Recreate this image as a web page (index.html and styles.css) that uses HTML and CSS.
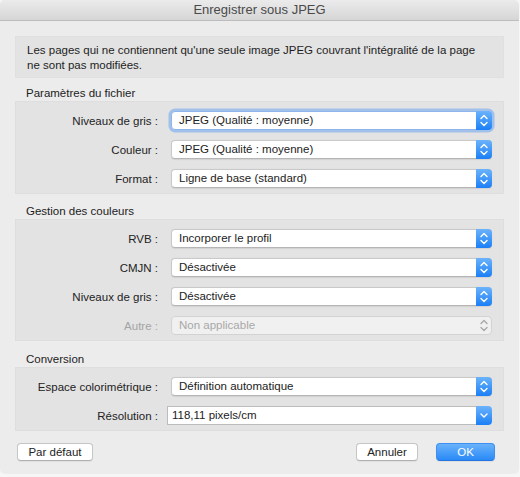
FILE: index.html
```html
<!DOCTYPE html>
<html lang="fr">
<head>
<meta charset="utf-8">
<title>Enregistrer sous JPEG</title>
<link rel="stylesheet" href="styles.css">
</head>
<body>
<div class="window">
  <div class="titlebar">Enregistrer sous JPEG</div>
  <div class="content">
    <div class="note">Les pages qui ne contiennent qu'une seule image JPEG couvrant l'intégralité de la page<br>ne sont pas modifiées.</div>

    <section class="group">
      <div class="group-title">Paramètres du fichier</div>
      <div class="box">
        <div class="row">
          <span class="label">Niveaux de gris :</span>
          <div class="popup focus"><span class="value">JPEG (Qualité : moyenne)</span><span class="arrows"><svg width="16" height="19" viewBox="0 0 16 19"><polyline points="5,7.5 8,4.5 11,7.5"/><polyline points="5,11.5 8,14.5 11,11.5"/></svg></span></div>
        </div>
        <div class="row">
          <span class="label">Couleur :</span>
          <div class="popup"><span class="value">JPEG (Qualité : moyenne)</span><span class="arrows"><svg width="16" height="19" viewBox="0 0 16 19"><polyline points="5,7.5 8,4.5 11,7.5"/><polyline points="5,11.5 8,14.5 11,11.5"/></svg></span></div>
        </div>
        <div class="row">
          <span class="label">Format :</span>
          <div class="popup"><span class="value">Ligne de base (standard)</span><span class="arrows"><svg width="16" height="19" viewBox="0 0 16 19"><polyline points="5,7.5 8,4.5 11,7.5"/><polyline points="5,11.5 8,14.5 11,11.5"/></svg></span></div>
        </div>
      </div>
    </section>

    <section class="group">
      <div class="group-title">Gestion des couleurs</div>
      <div class="box">
        <div class="row">
          <span class="label">RVB :</span>
          <div class="popup"><span class="value">Incorporer le profil</span><span class="arrows"><svg width="16" height="19" viewBox="0 0 16 19"><polyline points="5,7.5 8,4.5 11,7.5"/><polyline points="5,11.5 8,14.5 11,11.5"/></svg></span></div>
        </div>
        <div class="row">
          <span class="label">CMJN :</span>
          <div class="popup"><span class="value">Désactivée</span><span class="arrows"><svg width="16" height="19" viewBox="0 0 16 19"><polyline points="5,7.5 8,4.5 11,7.5"/><polyline points="5,11.5 8,14.5 11,11.5"/></svg></span></div>
        </div>
        <div class="row">
          <span class="label">Niveaux de gris :</span>
          <div class="popup"><span class="value">Désactivée</span><span class="arrows"><svg width="16" height="19" viewBox="0 0 16 19"><polyline points="5,7.5 8,4.5 11,7.5"/><polyline points="5,11.5 8,14.5 11,11.5"/></svg></span></div>
        </div>
        <div class="row disabled">
          <span class="label">Autre :</span>
          <div class="popup"><span class="value">Non applicable</span><span class="arrows"><svg width="16" height="19" viewBox="0 0 16 19"><polyline points="5,7.5 8,4.5 11,7.5"/><polyline points="5,11.5 8,14.5 11,11.5"/></svg></span></div>
        </div>
      </div>
    </section>

    <section class="group last">
      <div class="group-title">Conversion</div>
      <div class="box">
        <div class="row">
          <span class="label">Espace colorimétrique :</span>
          <div class="popup"><span class="value">Définition automatique</span><span class="arrows"><svg width="16" height="19" viewBox="0 0 16 19"><polyline points="5,7.5 8,4.5 11,7.5"/><polyline points="5,11.5 8,14.5 11,11.5"/></svg></span></div>
        </div>
        <div class="row">
          <span class="label">Résolution :</span>
          <div class="combo"><span class="field">118,11 pixels/cm</span><span class="arrows"><svg width="16" height="19" viewBox="0 0 16 19"><polyline points="5,8 8,11 11,8"/></svg></span></div>
        </div>
      </div>
    </section>

    <div class="buttons">
      <button class="btn">Par défaut</button>
      <span class="spacer"></span>
      <button class="btn cancel">Annuler</button>
      <button class="btn primary">OK</button>
    </div>
  </div>
</div>
</body>
</html>
```

FILE: styles.css
```css
html, body {
  margin: 0;
  padding: 0;
}
body {
  background: #f6f6f6;
  font-family: "Liberation Sans", Arial, sans-serif;
  font-size: 11.5px;
  color: #222;
}
.window {
  width: 519px;
  height: 474px;
  background: #ececec;
  border-radius: 5px;
  overflow: hidden;
  box-sizing: border-box;
}
.titlebar {
  height: 20px;
  line-height: 20px;
  text-align: center;
  font-size: 13px;
  color: #4a4a4a;
  background: linear-gradient(#ebebeb, #d6d6d6);
  border-bottom: 1px solid #bdbdbd;
}
.content {
  padding: 15px 15px 0 15px;
}
.note {
  background: #e3e3e3;
  border: 1px solid #e0e0e0;
  padding: 6px 11px 4px;
  line-height: 15px;
  color: #1e1e1e;
  white-space: nowrap;
}
.group {
  margin-top: 8px;
}
.group + .group {
  margin-top: 10px;
}
.group.last {
  margin-top: 11px;
}
.group-title {
  padding-left: 11px;
  line-height: 15px;
  height: 15px;
  color: #222;
}
.box {
  background: #e3e3e3;
  border: 1px solid #dedede;
  padding: 9px 11px 5px 0;
  display: flex;
  flex-direction: column;
  gap: 10px;
}
.row {
  display: grid;
  grid-template-columns: 142px 1fr;
  column-gap: 13px;
  align-items: center;
  height: 19px;
}
.label {
  text-align: right;
  color: #222;
  white-space: nowrap;
}
.popup {
  height: 19px;
  box-sizing: border-box;
  background: #fff;
  border: 1px solid #c9c9c9;
  border-bottom-color: #b5b5b5;
  border-radius: 4px;
  display: flex;
  align-items: center;
  box-shadow: 0 0.5px 1px rgba(0,0,0,0.08);
}
.popup.focus {
  box-shadow: 0 0 0 2.5px rgba(110, 165, 240, 0.55);
  border-color: #8fb5ea;
}
.value {
  flex: 1;
  padding-left: 7px;
  line-height: 17px;
  white-space: nowrap;
  overflow: hidden;
}
.arrows {
  width: 16px;
  height: 19px;
  margin: -1px -1px -1px 0;
  border-radius: 0 4px 4px 0;
  background: linear-gradient(#6cb3fb, #1b7ff6);
  display: flex;
  align-items: center;
  justify-content: center;
}
.arrows svg {
  display: block;
}
.arrows polyline {
  fill: none;
  stroke: #fff;
  stroke-width: 1.4;
  stroke-linecap: round;
  stroke-linejoin: round;
}
.disabled .label {
  color: #a3a3a3;
}
.disabled .popup {
  background: #f0f0f0;
  border-color: #d3d3d3;
  box-shadow: none;
}
.disabled .value {
  color: #a8a8a8;
}
.disabled .arrows {
  background: transparent;
}
.disabled .arrows polyline {
  stroke: #a9a9a9;
}
.combo {
  margin-left: -4px;
  height: 19px;
  display: flex;
  align-items: center;
}
.combo .field {
  flex: 1;
  height: 19px;
  box-sizing: border-box;
  background: #fff;
  border: 1px solid #bcbcbc;
  border-right: none;
  padding-left: 4px;
  line-height: 17px;
}
.combo .arrows {
  margin: 0;
  height: 19px;
  border-radius: 0 4px 4px 0;
}
.buttons {
  margin-top: 12px;
  display: flex;
  align-items: center;
  gap: 18px;
  padding: 0 9px 0 2px;
}
.spacer {
  flex: 1;
}
.btn {
  height: 18px;
  padding: 0;
  font-family: "Liberation Sans", Arial, sans-serif;
  font-size: 11.5px;
  color: #222;
  background: #fff;
  border: 1px solid #c6c6c6;
  border-bottom-color: #b0b0b0;
  border-radius: 4px;
  line-height: 16px;
  box-shadow: 0 0.5px 1px rgba(0,0,0,0.06);
  width: 76px;
}
.btn.cancel {
  width: 62px;
}
.btn.primary {
  width: 59px;
  color: #fff;
  background: linear-gradient(#6ab2fb, #2a8af7);
  border-color: #3d8ff0;
  border-bottom-color: #2274e0;
}
```
